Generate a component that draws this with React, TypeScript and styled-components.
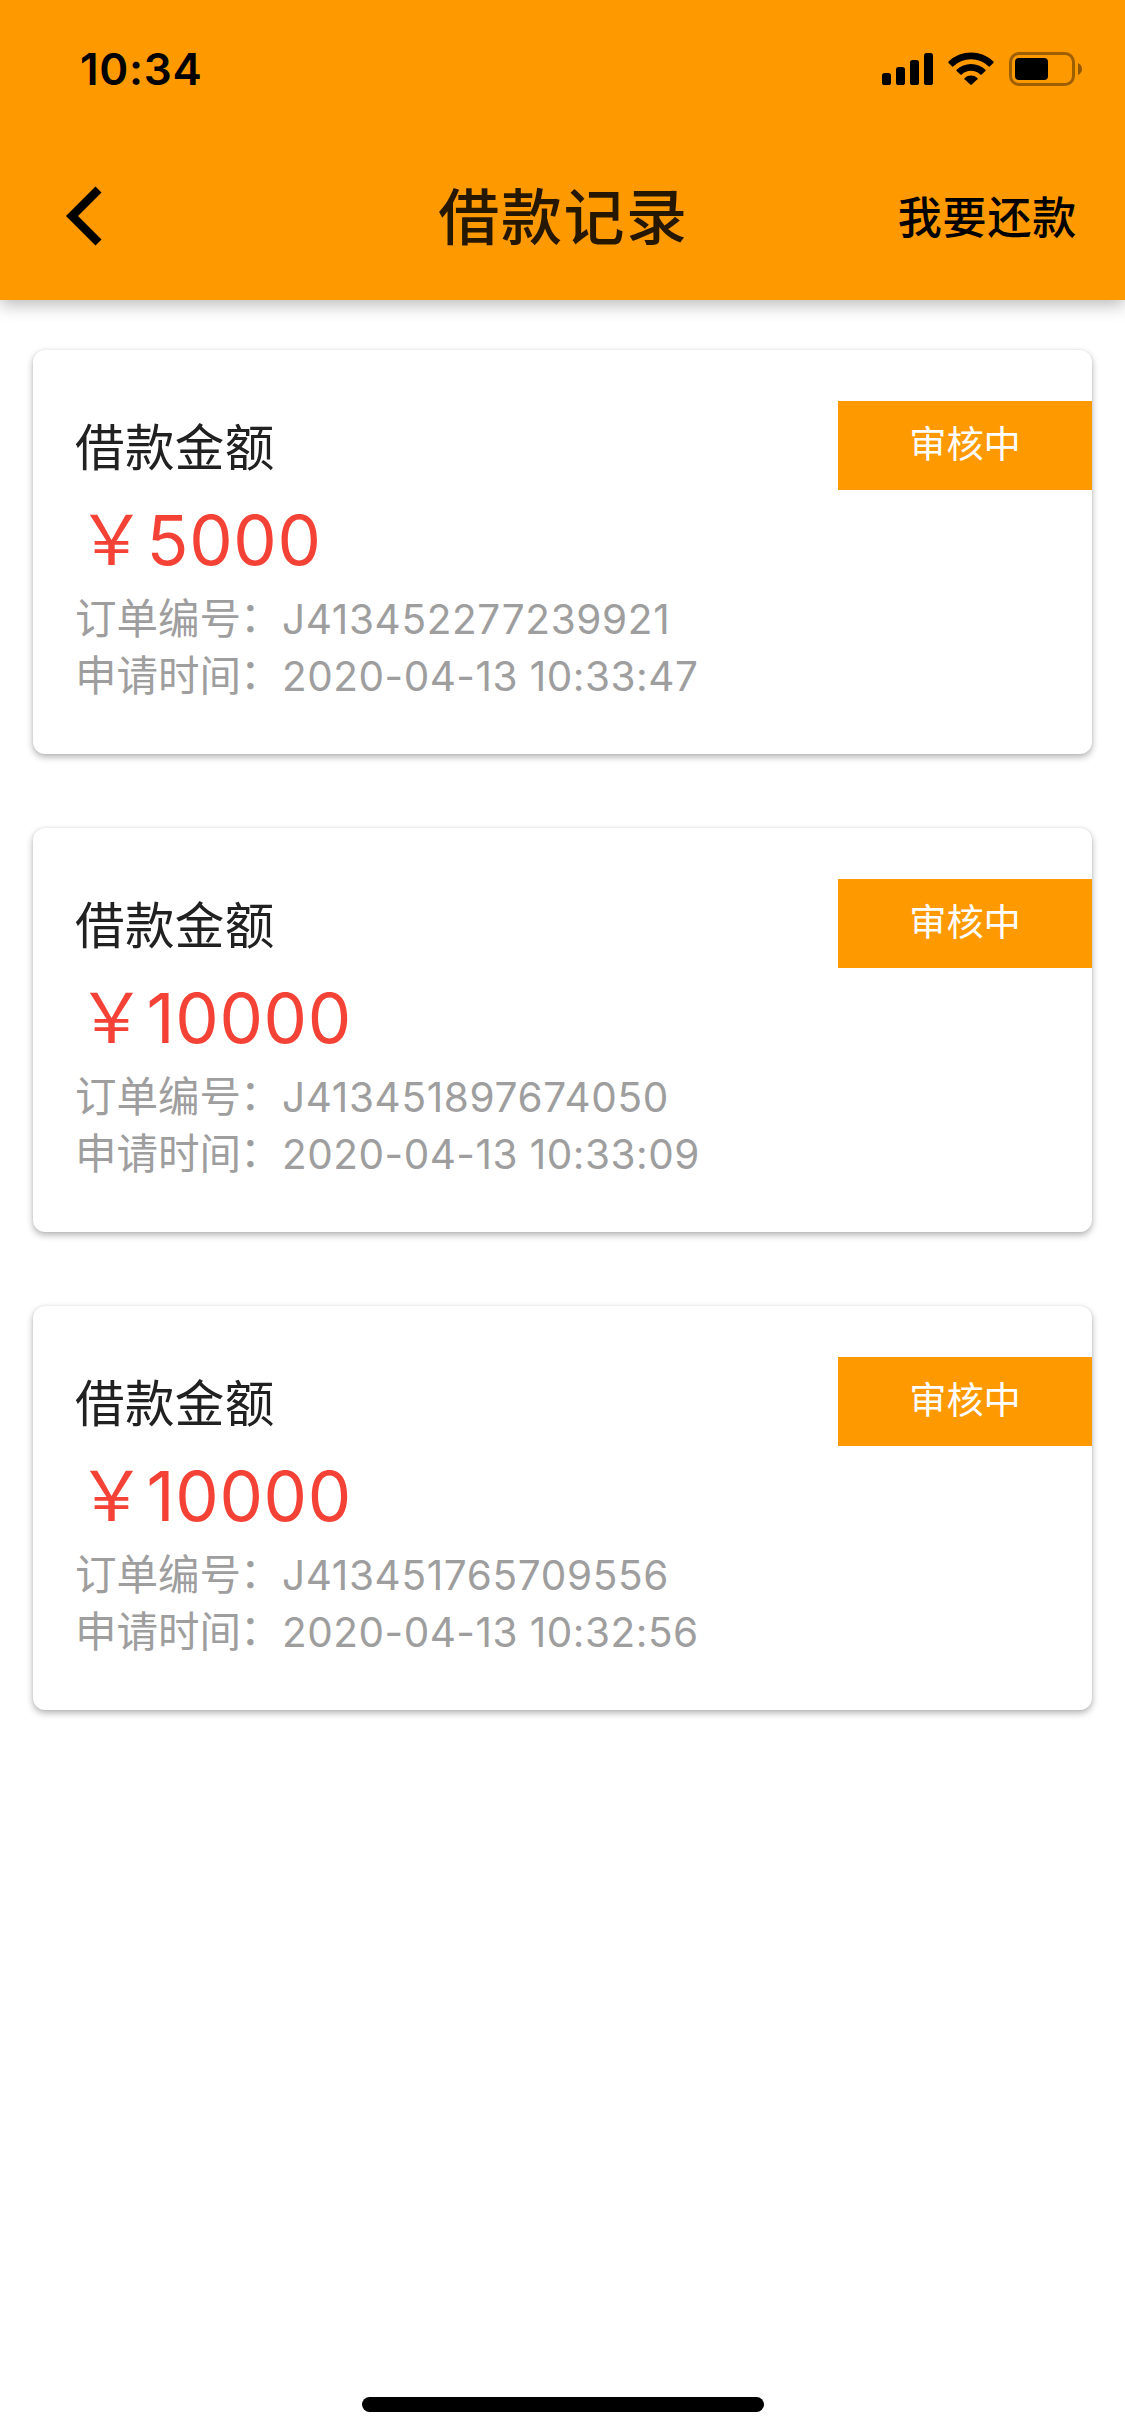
import React from "react";
import styled, { createGlobalStyle } from "styled-components";

const GlobalStyle = createGlobalStyle`
  * { box-sizing: border-box; }
  body {
    margin: 0;
    background: #fff;
    font-family: Inter, "Noto Sans CJK SC", sans-serif;
    font-feature-settings: "calt" 0;
  }
`;

const Screen = styled.div`
  display: flex;
  flex-direction: column;
  width: 1125px;
  height: 2436px;
  background: #fff;
  overflow: hidden;
`;

const Header = styled.header`
  flex: none;
  height: 300px;
  background: #ff9900;
  box-shadow: 0 5px 16px rgba(0, 0, 0, 0.27);
`;

const StatusBar = styled.div`
  display: flex;
  align-items: center;
  justify-content: space-between;
  height: 132px;
  padding: 5px 42px 0 80px;
`;

const Clock = styled.time`
  font-size: 44px;
  line-height: 54px;
  font-weight: 600;
  letter-spacing: 0.7px;
  color: #000;
`;

const StatusIcons = styled.svg`
  display: block;
  width: 202px;
  height: 36px;
`;

const NavBar = styled.nav`
  display: grid;
  grid-template-columns: 1fr auto 1fr;
  align-items: center;
  height: 168px;
  padding: 0 48px 0 64px;
`;

const BackButton = styled.button`
  display: flex;
  justify-self: start;
  padding: 0;
  border: 0;
  background: none;
`;

const Title = styled.h1`
  margin: 0;
  padding: 4px 14px 0 0;
  font-size: 61px;
  line-height: 80px;
  font-weight: 500;
  letter-spacing: 1.6px;
  color: rgba(0, 0, 0, 0.85);
`;

const RepayButton = styled.button`
  justify-self: end;
  padding: 3px 0 0;
  border: 0;
  background: none;
  font: inherit;
  font-size: 44px;
  line-height: 60px;
  font-weight: 500;
  letter-spacing: 0.8px;
  color: #000;
`;

const List = styled.main`
  flex: 1;
  display: flex;
  flex-direction: column;
  gap: 74px;
  padding: 50px 33px 0;
`;

const Card = styled.article`
  display: flex;
  justify-content: space-between;
  align-items: flex-start;
  height: 404px;
  padding: 50px 0 0 42px;
  border-radius: 12px;
  background: #fff;
  box-shadow: 0 3px 7px rgba(0, 0, 0, 0.3), 0 0 2px rgba(0, 0, 0, 0.1);
`;

const Details = styled.div`
  display: flex;
  flex-direction: column;
  padding-top: 13px;
`;

const Label = styled.div`
  font-size: 49.5px;
  line-height: 70px;
  letter-spacing: 0.4px;
  color: #212121;
`;

const Amount = styled.div`
  margin-top: 13px;
  padding-left: 2px;
  font-size: 69px;
  line-height: 88px;
  letter-spacing: 0.6px;
  color: #f44336;
`;

const Meta = styled.div<{ $first?: boolean }>`
  display: flex;
  margin-top: ${(p) => (p.$first ? "7px" : "0")};
  font-size: 40.5px;
  line-height: 57px;
  letter-spacing: ${(p) => (p.$first ? "0.65px" : "0.5px")};
  white-space: nowrap;
  color: #9e9e9e;
`;

const MetaName = styled.span`
  width: 207px;
  font-size: 41.5px;
  letter-spacing: 0;
`;

const Colon = styled.span`
  margin-left: -1px;
  vertical-align: 2px;
  line-height: 1;
`;

const Badge = styled.div`
  display: flex;
  align-items: center;
  justify-content: center;
  width: 254px;
  height: 89px;
  margin-top: 1px;
  padding-bottom: 8px;
  background: #ff9900;
  font-size: 37.2px;
  color: #fff;
`;

const HomeBar = styled.footer`
  flex: none;
  align-self: center;
  width: 402px;
  height: 15px;
  margin-bottom: 24px;
  border-radius: 8px;
  background: #000;
`;

const orders = [
  { amount: "5000", id: "J413452277239921", time: "2020-04-13 10:33:47" },
  { amount: "10000", id: "J413451897674050", time: "2020-04-13 10:33:09" },
  { amount: "10000", id: "J413451765709556", time: "2020-04-13 10:32:56" },
];

function SystemIcons() {
  return (
    <StatusIcons viewBox="881 51 202 36">
      <rect x="882" y="73" width="9" height="12" rx="2.6" />
      <rect x="896" y="67" width="9" height="18" rx="2.6" />
      <rect x="910" y="60" width="9" height="25" rx="2.6" />
      <rect x="924" y="53" width="9" height="32" rx="2.6" />
      <path d="M948.6 61.6A32 32 0 0 1 993.4 61.6Q994 62.3 993.4 63L989.8 66.4Q989.2 66.9 988.5 66.3A25.4 25.4 0 0 0 953.5 66.3Q952.8 66.9 952.2 66.4L948.6 63Q948 62.3 948.6 61.6Z" />
      <path d="M956.6 69.7A20.8 20.8 0 0 1 985.4 69.7Q986 70.4 985.4 71.1L981.6 74.5Q981 75 980.3 74.4A14 14 0 0 0 961.7 74.4Q961 75 960.4 74.5L956.6 71.1Q956 70.4 956.6 69.7Z" />
      <path d="M964.6 78A9.8 9.8 0 0 1 977.4 78Q978 78.6 977.4 79.3L971.7 84.6Q971 85.2 970.3 84.6L964.6 79.3Q964 78.6 964.6 78Z" />
      <rect x="1010.5" y="53.5" width="63" height="31" rx="8.5" fill="none" stroke="#000" strokeOpacity="0.38" strokeWidth="3" />
      <rect x="1015" y="58" width="33" height="22" rx="4" />
      <path d="M1078 63Q1082 65 1082 69T1078 75Z" fillOpacity="0.42" />
    </StatusIcons>
  );
}

export default function App() {
  return (
    <Screen>
      <GlobalStyle />
      <Header>
        <StatusBar>
          <Clock>10:34</Clock>
          <SystemIcons />
        </StatusBar>
        <NavBar>
          <BackButton aria-label="返回">
            <svg width="40" height="62" viewBox="64.5 185 40 62">
              <path d="M99 189.5 72.5 216 99 242.5" fill="none" stroke="#000" strokeWidth="8.5" />
            </svg>
          </BackButton>
          <Title>借款记录</Title>
          <RepayButton>我要还款</RepayButton>
        </NavBar>
      </Header>
      <List>
        {orders.map((order) => (
          <Card key={order.id}>
            <Details>
              <Label>借款金额</Label>
              <Amount>{"\uFFE5"}{order.amount}</Amount>
              <Meta $first>
                <MetaName>订单编号<Colon>{"\uFF1A"}</Colon></MetaName>
                <span>{order.id}</span>
              </Meta>
              <Meta>
                <MetaName>申请时间<Colon>{"\uFF1A"}</Colon></MetaName>
                <span>{order.time}</span>
              </Meta>
            </Details>
            <Badge>审核中</Badge>
          </Card>
        ))}
      </List>
      <HomeBar />
    </Screen>
  );
}
